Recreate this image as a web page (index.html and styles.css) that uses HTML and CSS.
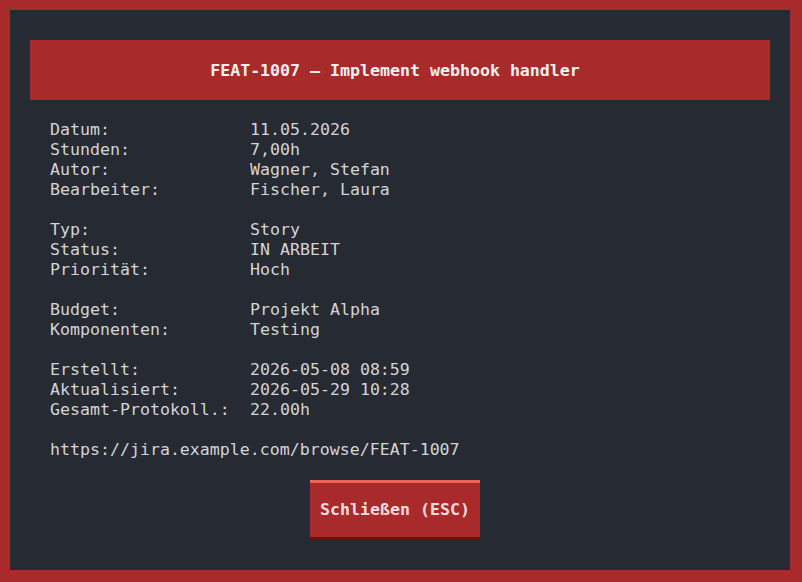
FILE: index.html
```html
<!DOCTYPE html>
<html lang="de">
<head>
<meta charset="utf-8">
<title>FEAT-1007</title>
<link rel="stylesheet" href="styles.css">
</head>
<body>
<div class="frame">
  <div class="title">FEAT-1007 — Implement webhook handler</div>
  <div class="details">
    <div class="row"><span class="label">Datum:</span><span>11.05.2026</span></div>
    <div class="row"><span class="label">Stunden:</span><span>7,00h</span></div>
    <div class="row"><span class="label">Autor:</span><span>Wagner, Stefan</span></div>
    <div class="row"><span class="label">Bearbeiter:</span><span>Fischer, Laura</span></div>
    <div class="gap"></div>
    <div class="row"><span class="label">Typ:</span><span>Story</span></div>
    <div class="row"><span class="label">Status:</span><span>IN ARBEIT</span></div>
    <div class="row"><span class="label">Priorität:</span><span>Hoch</span></div>
    <div class="gap"></div>
    <div class="row"><span class="label">Budget:</span><span>Projekt Alpha</span></div>
    <div class="row"><span class="label">Komponenten:</span><span>Testing</span></div>
    <div class="gap"></div>
    <div class="row"><span class="label">Erstellt:</span><span>2026-05-08 08:59</span></div>
    <div class="row"><span class="label">Aktualisiert:</span><span>2026-05-29 10:28</span></div>
    <div class="row"><span class="label">Gesamt-Protokoll.:</span><span>22.00h</span></div>
    <div class="gap"></div>
    <div class="row url">https://jira.example.com/browse/FEAT-1007</div>
  </div>
  <div class="actions">
    <button class="close-btn">Schließen (ESC)</button>
  </div>
</div>
</body>
</html>
```
FILE: styles.css
```css
* { box-sizing: border-box; }
html, body { margin: 0; padding: 0; background: #a92a2a; }
.frame {
  width: 800px;
  height: 580px;
  border: 10px solid #a92a2a;
  background: #262a33;
  padding: 30px 20px 0 20px;
  font-family: "DejaVu Sans Mono", monospace;
  font-size: 16.6px;
  color: #d4d4d4;
}
.title {
  height: 60px;
  background: #a92a2a;
  color: #f4eeee;
  font-weight: bold;
  display: flex;
  align-items: center;
  justify-content: center;
  padding-right: 10px;
}
.details {
  padding: 20px 20px 0 20px;
  line-height: 20px;
}
.row { display: flex; height: 20px; white-space: pre; }
.label { width: 200px; flex: none; }
.gap { height: 20px; }
.actions {
  display: flex;
  justify-content: center;
  padding-top: 20px;
  padding-right: 10px;
}
.close-btn {
  width: 170px;
  height: 60px;
  background: #a92a2a;
  border: none;
  border-top: 3px solid #ef6558;
  border-bottom: 3px solid #760a0a;
  color: #f2dcdc;
  font-family: "DejaVu Sans Mono", monospace;
  font-size: 16.6px;
  font-weight: bold;
  padding: 0 0 2px 0;
}
```
